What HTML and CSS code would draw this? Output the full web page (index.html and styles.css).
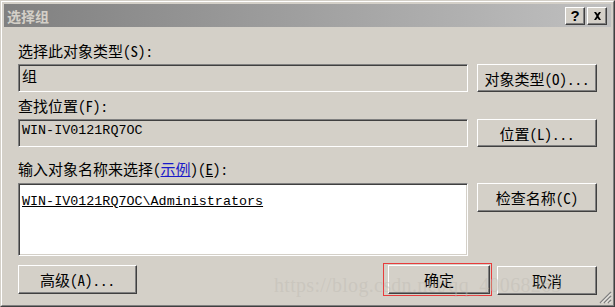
FILE: index.html
```html
<!DOCTYPE html>
<html lang="zh-CN">
<head>
    <meta charset="UTF-8">
    <title>选择组</title>
    <link rel="stylesheet" href="styles.css">
</head>
<body>
    <div class="window">
        <div class="frame">
            <div class="titlebar">
                <span class="title">选择组</span>
                <div class="caption-btns">
                    <span class="cap-btn help">?</span>
                    <span class="cap-btn">
                        <svg width="9" height="8" viewBox="0 0 9 8"><path d="M1 0h2l1.5 2 1.5-2h2L5.5 4 8 8H6L4.5 6 3 8H1l2.5-4z" fill="#000"/></svg>
                    </span>
                </div>
            </div>

            <div class="content">
                <div class="label first">选择此对象类型(S):</div>
                <div class="row">
                    <div class="field">组</div>
                    <div class="btn">对象类型(O)...</div>
                </div>

                <div class="label">查找位置(F):</div>
                <div class="row">
                    <div class="field mono">WIN-IV0121RQ7OC</div>
                    <div class="btn">位置(L)...</div>
                </div>

                <div class="label third">输入对象名称来选择(<a class="link">示例</a>)(<u>E</u>):</div>
                <div class="row">
                    <div class="name-box"><span class="mono name">WIN-IV0121RQ7OC\Administrators</span></div>
                    <div class="btn tall">检查名称(C)</div>
                </div>

                <div class="row bottom">
                    <div class="btn advanced">高级(A)...</div>
                    <div class="actions">
                        <div class="marked">
                            <div class="btn ok">确定</div>
                        </div>
                        <div class="btn cancel">取消</div>
                    </div>
                </div>
            </div>

            <div class="watermark">https://blog.csdn.net/qq_40068263</div>
            <svg class="grip" width="13" height="13" viewBox="0 0 13 13">
                <path d="M12 1L1 12M12 5L5 12M12 9L9 12" stroke="#808080" stroke-width="1.4"/>
                <path d="M12 2.5L2.5 12M12 6.5L6.5 12M12 10.5L10.5 12" stroke="#fff" stroke-width="0.8"/>
            </svg>
        </div>
    </div>
</body>
</html>
```

FILE: styles.css
```css
body {
    margin: 0;
    background: #d4d0c8;
    font-family: "Noto Sans Mono CJK SC", "Noto Sans CJK SC", sans-serif;
    font-size: 15px;
    color: #000;
}
.window {
    width: 615px;
    height: 307px;
    box-sizing: border-box;
    border: 1px solid;
    border-color: #d4d0c8 #404040 #404040 #d4d0c8;
}
.frame {
    position: relative;
    height: 100%;
    box-sizing: border-box;
    border: 1px solid;
    border-color: #fff #808080 #808080 #fff;
    padding: 2px;
    background: #d4d0c8;
}
.titlebar {
    height: 23px;
    display: flex;
    align-items: center;
    justify-content: space-between;
    background: linear-gradient(to right, #808080, #c0c0c0);
}
.title {
    padding-left: 3px;
    font-family: "Noto Sans CJK SC", sans-serif;
    font-size: 14px;
    font-weight: bold;
    color: #d4d0c8;
}
.caption-btns {
    display: flex;
    gap: 2px;
    padding-right: 4px;
}
.cap-btn {
    width: 20px;
    height: 18px;
    box-sizing: border-box;
    display: flex;
    align-items: center;
    justify-content: center;
    background: #d4d0c8;
    border: 1px solid;
    border-color: #fff #404040 #404040 #fff;
    box-shadow: inset -1px -1px #808080;
}
.help {
    font-family: "Liberation Sans", sans-serif;
    font-weight: bold;
    font-size: 15px;
    line-height: 1;
}
.content {
    padding: 0 14px;
}
.label {
    height: 18px;
    line-height: 18px;
    margin-top: 5px;
    white-space: nowrap;
}
.label.first {
    margin-top: 15px;
}
.label.third {
    margin-top: 13px;
}
.link {
    color: #1a1ac8;
    text-decoration: underline;
}
.row {
    display: flex;
    gap: 9px;
    align-items: flex-start;
    margin-top: 4px;
}
.field, .name-box {
    width: 450px;
    box-sizing: border-box;
    border: 1px solid;
    border-color: #808080 #fff #fff #808080;
    box-shadow: inset 1px 1px #404040, inset -1px -1px #d4d0c8;
    padding: 2px 3px;
}
.field {
    height: 28px;
    line-height: 17px;
}
.name-box {
    height: 73px;
    background: #fff;
    padding-top: 4px;
    margin-top: 1px;
}
.mono {
    font-family: "Liberation Mono", monospace;
    font-size: 13.4px;
}
.name {
    text-decoration: underline;
}
.btn {
    width: 120px;
    height: 28px;
    box-sizing: border-box;
    display: flex;
    align-items: center;
    justify-content: center;
    border: 1px solid;
    border-color: #fff #404040 #404040 #fff;
    box-shadow: inset -1px -1px #808080;
    background: #d4d0c8;
    white-space: nowrap;
}
.btn.tall {
    height: 29px;
    margin-top: 1px;
}
.row.bottom {
    justify-content: space-between;
    margin-top: 9px;
}
.advanced {
    width: 119px;
    height: 29px;
}
.actions {
    display: flex;
    align-items: center;
    gap: 5px;
}
.marked {
    border: 1px solid #e83c3c;
    padding: 1px 1px 1px 4px;
    margin-top: -2px;
}
.ok {
    width: 102px;
    height: 29px;
}
.cancel {
    width: 100px;
    height: 29px;
}
.watermark {
    position: absolute;
    left: 272px;
    top: 272px;
    font-family: "Liberation Serif", serif;
    font-size: 20px;
    letter-spacing: 0.3px;
    color: rgba(190, 186, 178, 0.45);
    pointer-events: none;
}
.grip {
    position: absolute;
    right: 1px;
    bottom: 1px;
}
```
